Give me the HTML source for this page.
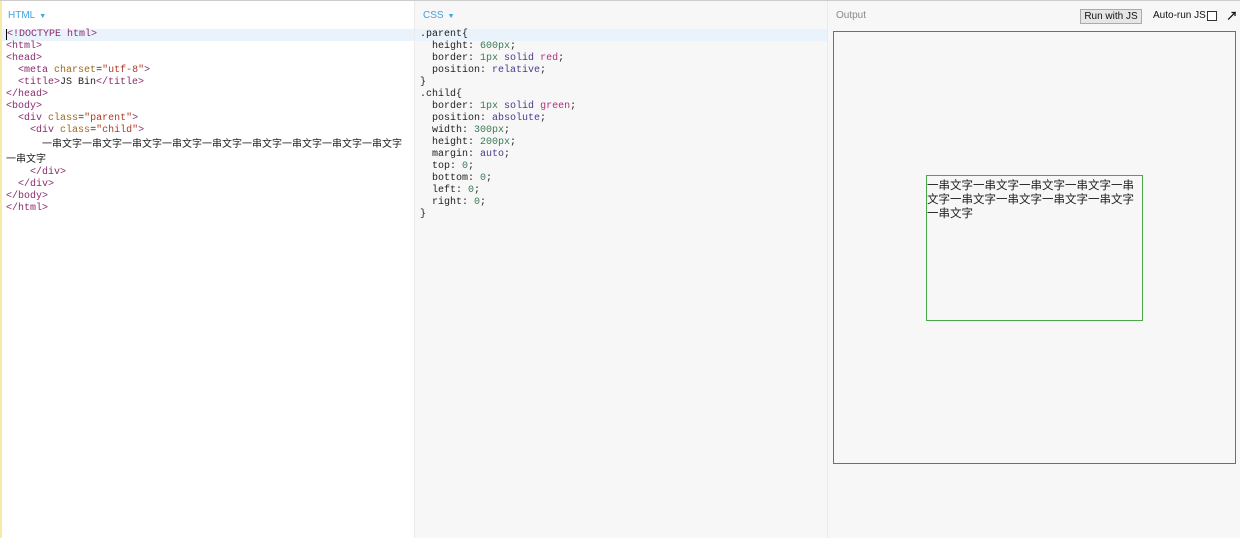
<!DOCTYPE html>
<html><head><meta charset="utf-8"><style>
*{margin:0;padding:0;box-sizing:border-box}
body{width:1240px;height:538px;overflow:hidden;background:#f7f7f7;font-family:"Liberation Sans","Noto Sans CJK SC",sans-serif;position:relative}
.p{position:absolute;top:1px;bottom:0}
#h{left:0;width:414px;background:#fff;border-left:2px solid #f7e9a6}
#c{left:414px;width:413px;background:#f7f7f7;border-left:1px solid #ebebeb}
#o{left:827px;width:413px;background:#f7f7f7;border-left:1px solid #ebebeb}
#top{position:absolute;left:0;top:0;width:1240px;height:1px;background:#ccc}
.lab{position:absolute;top:9px;font-size:10px;color:#3ea4e3}
.lab span{font-size:7px;margin-left:4px}
pre{position:absolute;top:28px;font-family:"Liberation Mono","Noto Sans CJK SC",monospace;font-size:10px;line-height:12px;color:#222;white-space:pre}
.hl{position:absolute;top:28px;height:12px;background:#eaf2fb}
.t{color:#8c2b6e}.a{color:#a0681c}.s{color:#b03a25}.n{color:#3a7a55}.k{color:#4a3a8e}.r{color:#b0307a}
.cj{font-family:"Noto Sans CJK SC",sans-serif;font-size:10px}
.rl{position:absolute;background:#e63c3c}
</style></head><body>
<div id="top"></div>
<div class="p" id="h">
<div class="hl" style="left:0;width:412px"></div>
<div class="lab" style="left:6px">HTML<span>▼</span></div>
<pre style="left:4px"><span style="border-left:1px solid #000"></span><span class="t">&lt;!DOCTYPE html&gt;</span>
<span class="t">&lt;html&gt;</span>
<span class="t">&lt;head&gt;</span>
  <span class="t">&lt;meta</span> <span class="a">charset</span>=<span class="s">"utf-8"</span><span class="t">&gt;</span>
  <span class="t">&lt;title&gt;</span>JS Bin<span class="t">&lt;/title&gt;</span>
<span class="t">&lt;/head&gt;</span>
<span class="t">&lt;body&gt;</span>
  <span class="t">&lt;div</span> <span class="a">class</span>=<span class="s">"parent"</span><span class="t">&gt;</span>
    <span class="t">&lt;div</span> <span class="a">class</span>=<span class="s">"child"</span><span class="t">&gt;</span>
      <span class="cj">一串文字一串文字一串文字一串文字一串文字一串文字一串文字一串文字一串文字</span>
<span class="cj">一串文字</span>
    <span class="t">&lt;/div&gt;</span>
  <span class="t">&lt;/div&gt;</span>
<span class="t">&lt;/body&gt;</span>
<span class="t">&lt;/html&gt;</span></pre>
</div>
<div class="p" id="c">
<div class="hl" style="left:0;width:412px"></div>
<div class="lab" style="left:8px">CSS<span>▼</span></div>
<pre style="left:5px">.parent{
  height: <span class="n">600px</span>;
  border: <span class="n">1px</span> <span class="k">solid</span> <span class="r">red</span>;
  position: <span class="k">relative</span>;
}
.child{
  border: <span class="n">1px</span> <span class="k">solid</span> <span class="r">green</span>;
  position: <span class="k">absolute</span>;
  width: <span class="n">300px</span>;
  height: <span class="n">200px</span>;
  margin: <span class="k">auto</span>;
  top: <span class="n">0</span>;
  bottom: <span class="n">0</span>;
  left: <span class="n">0</span>;
  right: <span class="n">0</span>;
}</pre>
</div>
<div class="p" id="o">
<div class="lab" style="left:8px;color:#888">Output</div>
<div style="position:absolute;left:252px;top:8px;width:62px;height:15px;border:1px solid #aaa;background:#e6e6e6;font-size:10px;line-height:13px;text-align:center;color:#111">Run with JS</div>
<div style="position:absolute;left:325px;top:9px;font-size:10px;color:#111">Auto-run JS</div>
<div style="position:absolute;left:379px;top:10px;width:10px;height:10px;border:1px solid #333;background:#fff"></div>
<div style="position:absolute;left:398px;top:6px;font-size:12px;font-weight:bold;color:#111">↗</div>
<div class="rl" style="left:5px;top:30px;width:403px;height:1px"></div>
<div class="rl" style="left:5px;top:462px;width:403px;height:1px"></div>
<div class="rl" style="left:5px;top:30px;width:1px;height:433px"></div>
<div class="rl" style="left:407px;top:30px;width:1px;height:433px"></div>
<div style="position:absolute;left:98px;top:174px;width:217px;height:146px;border:1px solid #4ca64c;font-family:'Noto Sans CJK SC',sans-serif;font-size:11.5px;line-height:14px;color:#222;word-break:break-all;padding-top:2px">一串文字一串文字一串文字一串文字一串文字一串文字一串文字一串文字一串文字一串文字</div>
</div>
</body></html>
